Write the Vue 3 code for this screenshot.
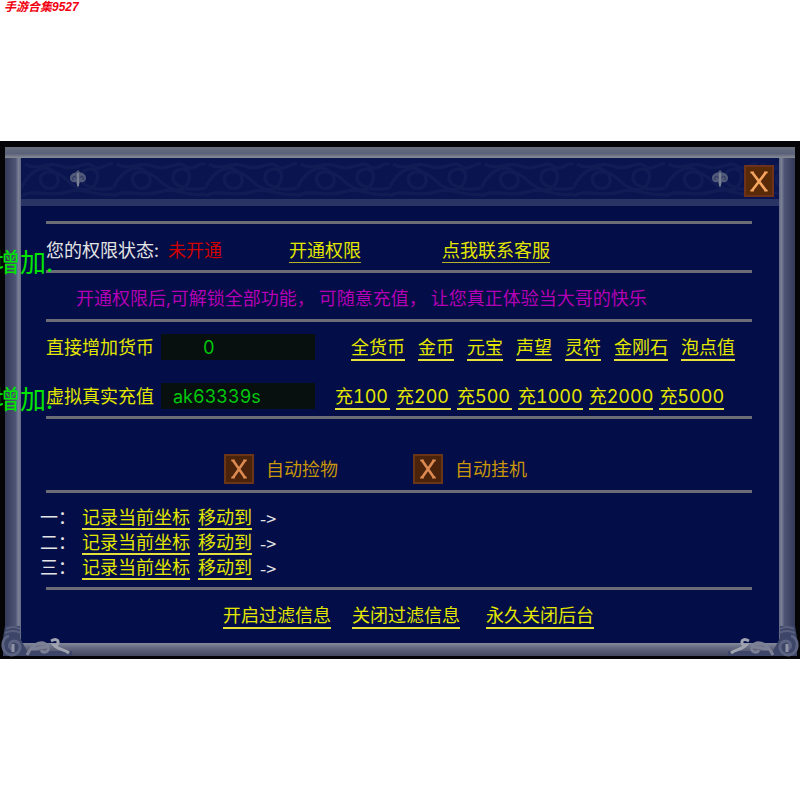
<template>
  <div class="page">
    <header class="watermark">手游合集9527</header>

    <main class="window">
      <div class="frame">
        <div class="panel">
          <div class="titlebar">
            <svg class="filigree" aria-hidden="true">
              <defs>
                <pattern id="scroll" width="92" height="40" patternUnits="userSpaceOnUse">
                  <g fill="none" stroke="#111c55" stroke-width="3">
                    <path d="M0 30C12 6 30 6 36 18S24 36 20 24S34 10 46 22" />
                    <path d="M46 22C58 34 72 36 76 22S62 8 60 18S76 34 92 30" />
                    <path d="M4 6C16 14 26 2 40 8S64 2 72 8S86 4 92 6" />
                    <path d="M0 38C14 30 28 40 46 34S76 40 92 36" />
                  </g>
                </pattern>
              </defs>
              <rect width="100%" height="100%" fill="url(#scroll)" />
            </svg>
            <svg v-for="n in 2" :key="n" class="emblem" viewBox="0 0 18 18" aria-hidden="true">
              <path d="M9 0L12 3H6Z M1 8C1 4 5 2 9 3C13 2 17 4 17 8C17 12 13 13 11 12L9 18L7 12C5 13 1 12 1 8Z" fill="#525a7a" />
              <path d="M4 10C3 6 6 5 7 8M14 10C15 6 12 5 11 8" fill="none" stroke="#232d5e" stroke-width="1" />
              <path d="M9 3V16" stroke="#7a8093" stroke-width="2" />
            </svg>
            <button class="close" type="button" aria-label="关闭">
              <svg viewBox="0 0 30 30" aria-hidden="true">
                <path d="M7 5L23 26M23 5L7 26" />
                <path d="M5 5H9M21 5H25M5 26H9M21 26H25" class="serif" />
              </svg>
            </button>
          </div>

          <div class="content">
            <section class="row status">
              <span class="label">您的权限状态:</span>
              <span class="state">未开通</span>
              <button class="link thin open" type="button">开通权限</button>
              <button class="link thin contact" type="button">点我联系客服</button>
            </section>

            <section class="row notice">
              <span v-for="part in notice" :key="part">{{ part }}</span>
            </section>

            <section class="recharge">
              <div class="line">
                <label for="amount">直接增加货币</label>
                <input id="amount" v-model="amount" class="amount" type="text" />
                <div class="links currencies">
                  <button v-for="c in currencies" :key="c" class="link" type="button">{{ c }}</button>
                </div>
              </div>
              <div class="line">
                <label for="account">虚拟真实充值</label>
                <input id="account" v-model="account" type="text" />
                <div class="links packs">
                  <button v-for="p in packs" :key="p" class="link" type="button">充{{ p }}</button>
                </div>
              </div>
            </section>

            <section class="toggles">
              <label v-for="t in toggles" :key="t.name" class="toggle">
                <input v-model="t.on" type="checkbox" />
                <svg viewBox="0 0 30 30" aria-hidden="true">
                  <g v-if="t.on">
                    <path d="M8 5L22 25M22 5L8 25" />
                    <path d="M6 5H10M20 5H24M6 25H10M20 25H24" class="serif" />
                  </g>
                </svg>
                <span>{{ t.name }}</span>
              </label>
            </section>

            <section class="points">
              <div v-for="p in points" :key="p" class="point">
                <span class="index">{{ p }}：</span>
                <button class="link" type="button">记录当前坐标</button>
                <button class="link" type="button">移动到</button>
                <span class="arrow">-&gt;</span>
              </div>
            </section>

            <section class="filters">
              <button class="link" type="button">开启过滤信息</button>
              <button class="link" type="button">关闭过滤信息</button>
              <button class="link forever" type="button">永久关闭后台</button>
            </section>
          </div>
        </div>
      </div>

      <svg v-for="side in ['left', 'right']" :key="side" class="corner" :class="side" viewBox="0 0 72 34" aria-hidden="true">
        <path d="M5 2H20V14L27 27H72V32H3V14Z" fill="#3d4568" />
        <path d="M6 5Q13 1 20 5M5 9Q13 5 21 9" fill="none" stroke="#59607f" stroke-width="2" />
        <path d="M9 12C0 14 1 30 11 31C22 31 23 17 14 17C8 17 8 26 14 25" fill="none" stroke="#5c6382" stroke-width="3" />
        <path d="M13 20V28" stroke="#9094a4" stroke-width="3" />
        <path d="M27 31C34 17 44 16 48 23C50 28 43 30 41 26M31 24C38 27 42 21 46 24" fill="none" stroke="#7c8196" stroke-width="3" />
        <path d="M51 17C60 12 60 22 54 21C58 26 64 25 69 29" fill="none" stroke="#a0a4b0" stroke-width="3" />
      </svg>

      <span class="float first">增加.</span>
      <span class="float second">增加.</span>
    </main>
  </div>
</template>

<script setup>
import { ref } from 'vue';

const amount = ref('0');
const account = ref('ak63339s');

const notice = ['开通权限后,可解锁全部功能，', '可随意充值，', '让您真正体验当大哥的快乐'];
const currencies = ['全货币', '金币', '元宝', '声望', '灵符', '金刚石', '泡点值'];
const packs = [100, 200, 500, 1000, 2000, 5000];
const points = ['一', '二', '三'];

const toggles = ref([
  { name: '自动捡物', on: true },
  { name: '自动挂机', on: true },
]);
</script>

<style>
body {
  margin: 0;
  background: #fff;
}
</style>

<style scoped>
.page {
  font-family: Inter, "Noto Sans CJK SC", sans-serif;
  font-size: 18px;
  font-feature-settings: "calt" 0, "tnum" 1;
  line-height: 24px;
  color: #e4e4e4;
}

.watermark {
  height: 141px;
  padding-left: 4px;
  font: italic bold 12px/14px "Liberation Sans", "Noto Sans CJK SC", sans-serif;
  color: #f00010;
}

.window {
  position: relative;
  overflow: hidden;
  padding: 6px 5px 3px;
  background: #050507;
}

.frame {
  padding: 11px 16px 13px;
  background:
    linear-gradient(#6a6f80, #5a6078 60%, #888c98) top / 100% 11px no-repeat,
    linear-gradient(#85899a, #62667e 40%, #44475f) bottom / 100% 13px no-repeat,
    linear-gradient(90deg, #343a58, #4c5374 65%, #7b8196 85%, #62687f) left / 16px 100% no-repeat,
    linear-gradient(270deg, #343a58, #4c5374 65%, #7b8196 85%, #62687f) right / 16px 100% no-repeat;
}

.panel {
  background: #030d47;
}

.titlebar {
  position: relative;
  display: flex;
  align-items: center;
  height: 41px;
  padding: 0 5px 0 48px;
  border-bottom: 7px solid #2a3464;
  background: #0a1550;
}

.filigree {
  position: absolute;
  inset: 0;
  width: 100%;
  height: 100%;
}

.emblem {
  position: relative;
  width: 18px;
  height: 18px;
}

.emblem + .emblem {
  margin-left: auto;
}

.close {
  position: relative;
  width: 30px;
  height: 32px;
  margin: 5px 0 0 15px;
  padding: 0;
  border: 2px solid #6e321b;
  background: #582a08;
  cursor: pointer;
}

.close svg {
  display: block;
  width: 26px;
  height: 28px;
}

.close path,
.toggle path {
  fill: none;
  stroke: #f5a560;
  stroke-width: 3;
}

.toggle path {
  stroke: #dc8a52;
}

.close .serif,
.toggle .serif {
  stroke-width: 2;
}

.content {
  padding: 15px 27px 0 25px;
}

section {
  box-sizing: border-box;
  border-top: 3px solid #6c6c76;
}

.row {
  display: flex;
  align-items: center;
  height: 49px;
  padding-top: 8px;
}

.link {
  padding: 2px 0 0;
  border: 0;
  border-bottom: 2px solid #e6e03c;
  background: none;
  font: inherit;
  line-height: 22px;
  color: #e2e600;
  white-space: nowrap;
  cursor: pointer;
}

.thin {
  padding: 0;
  border-bottom: 1px solid #b4b428;
}

.label {
  width: 122px;
}

.state {
  width: 121px;
  color: #d00000;
}

.contact {
  margin-left: 81px;
}

.notice {
  gap: 4px;
  padding-left: 30px;
  padding-top: 6px;
  color: #b400b4;
}

.recharge {
  display: flex;
  flex-direction: column;
  gap: 23px;
  padding: 12px 0 7px;
}

.line {
  display: flex;
  align-items: center;
  height: 26px;
  color: #e2e600;
}

.line label {
  width: 115px;
  padding-top: 2px;
}

.line input {
  box-sizing: border-box;
  width: 154px;
  height: 26px;
  padding: 0 12px;
  border: 0;
  outline: none;
  background: #07100f;
  font: inherit;
  color: #00c80a;
}

.line .amount {
  padding-left: 42px;
}

.links {
  display: flex;
  padding-top: 2px;
}

.currencies {
  gap: 13px;
  margin-left: 36px;
}

.packs {
  gap: 6px;
  margin-left: 20px;
}

.packs .link {
  min-width: 55px;
  text-align: left;
}

.toggles {
  display: flex;
  gap: 75px;
  height: 74px;
  padding: 35px 0 0 178px;
}

.toggle {
  display: flex;
  align-items: center;
  gap: 12px;
  height: 30px;
  color: #c8960a;
  cursor: pointer;
}

.toggle span {
  padding-top: 2px;
}

.toggle input {
  position: absolute;
  opacity: 0;
}

.toggle svg {
  box-sizing: border-box;
  width: 30px;
  height: 30px;
  border: 2px solid #6b3518;
  background: #4b220a;
}

.points {
  display: flex;
  flex-direction: column;
  gap: 1px;
  height: 97px;
  padding-top: 13px;
}

.point {
  display: flex;
  gap: 8px;
  height: 24px;
  margin-left: -6px;
}

.point .link {
  line-height: 20px;
}

.index {
  width: 34px;
  white-space: nowrap;
}

.arrow {
  font-family: "Noto Sans CJK SC", sans-serif;
}

.filters {
  display: flex;
  gap: 21px;
  height: 56px;
  padding: 13px 0 0 177px;
}

.filters .link {
  height: 26px;
}

.forever {
  margin-left: 5px;
}

.corner {
  position: absolute;
  bottom: 1px;
  width: 72px;
  height: 34px;
}

.corner.left {
  left: 0;
}

.corner.right {
  right: 0;
  transform: scaleX(-1);
}

.float {
  position: absolute;
  left: -6px;
  font-size: 26px;
  line-height: 32px;
  color: #00e600;
}

.first {
  top: 106px;
}

.second {
  top: 243px;
}
</style>
